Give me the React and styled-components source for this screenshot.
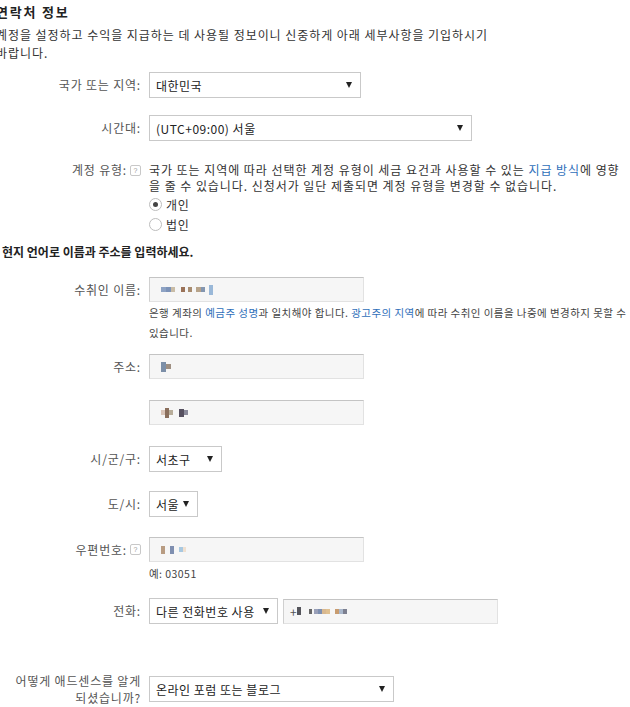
import styled, { createGlobalStyle } from "styled-components";

const GlobalStyle = createGlobalStyle`
  body {
    margin: 0;
    background: #fff;
    font-family: "Noto Sans CJK KR", "Noto Sans", sans-serif;
    color: #333;
  }
`;

const Page = styled.div`
  margin-left: -4px;
  width: 640px;
  overflow: hidden;
`;

const Title = styled.h2`
  margin: 3px 0 0;
  font-size: 13px;
  line-height: 18px;
  font-weight: bold;
  letter-spacing: 1.8px;
  color: #222;
`;

const Intro = styled.p`
  margin: 5px 0 0;
  font-size: 12px;
  line-height: 18px;
  letter-spacing: 0.95px;
  color: #333;
  white-space: nowrap;
`;

const SectionHeading = styled.h3`
  margin: ${(p) => p.$top}px 0 0 6px;
  font-size: 12px;
  line-height: 18px;
  font-weight: bold;
  color: #222;
`;

const Row = styled.div`
  display: grid;
  grid-template-columns: 145px 1fr;
  column-gap: 8px;
  align-items: ${(p) => (p.$top ? "start" : "center")};
  margin-top: ${(p) => p.$mt}px;
`;

const Label = styled.div`
  text-align: right;
  font-size: 12px;
  line-height: ${(p) => p.$lh || 16}px;
  letter-spacing: 0.8px;
  color: #555;
  white-space: nowrap;
  display: flex;
  justify-content: flex-end;
  align-items: center;
  gap: 3px;
`;

const HelpIcon = styled.span`
  display: inline-flex;
  align-items: center;
  justify-content: center;
  width: 9px;
  height: 9px;
  border: 1px solid #c8c8c8;
  border-radius: 2px;
  font-size: 7px;
  line-height: 1;
  letter-spacing: 0;
  color: #999;
  font-family: "Liberation Sans", sans-serif;
`;

const Controls = styled.div`
  display: flex;
  align-items: center;
  gap: 5px;
`;

const Select = styled.div`
  box-sizing: border-box;
  width: ${(p) => p.$w}px;
  height: 26px;
  border: 1px solid #c9c9c9;
  background: #fff;
  display: flex;
  align-items: center;
  justify-content: space-between;
  padding: 0 8px 0 6px;
  font-size: 12px;
  letter-spacing: 0.5px;
  color: #222;
  white-space: nowrap;
`;

const Arrow = styled.span`
  width: 0;
  height: 0;
  border-left: 3px solid transparent;
  border-right: 3px solid transparent;
  border-top: 6px solid #222;
  margin-left: 4px;
  flex-shrink: 0;
`;

const Input = styled.div`
  box-sizing: border-box;
  width: 215px;
  height: 25px;
  background: #f6f6f6;
  border: 1px solid #e2e2e2;
  border-top-color: #c4c4c4;
  border-left-color: #d0d0d0;
  display: flex;
  align-items: center;
  padding-left: ${(p) => p.$pl || 11}px;
  font-size: 12px;
  color: #555;
`;

const Pixel = styled.span`
  display: inline-block;
  width: ${(p) => p.$w || 5}px;
  height: ${(p) => p.$h || 5}px;
  background: ${(p) => p.$c};
  margin-right: ${(p) => p.$gap || 0}px;
`;

const PixelGroup = styled.span`
  display: inline-flex;
  align-items: center;
  height: 10px;
`;

const Blur = ({ pixels }) => (
  <PixelGroup>
    {pixels.map(([c, w, gap, h], i) => (
      <Pixel key={i} $c={c} $w={w} $gap={gap} $h={h} />
    ))}
  </PixelGroup>
);

const Body = styled.div`
  font-size: 12px;
  line-height: 16px;
  letter-spacing: 0.95px;
  color: #333;
  white-space: nowrap;
`;

const Link = styled.span`
  color: #2f6fba;
`;

const RadioRow = styled.label`
  display: flex;
  align-items: center;
  gap: 4px;
  height: 20px;
  font-size: 12px;
  letter-spacing: 0.8px;
  color: #333;
`;

const Radio = styled.span`
  box-sizing: border-box;
  width: 13px;
  height: 13px;
  border-radius: 50%;
  border: 1px solid #bdbdbd;
  background: #fff;
  display: inline-flex;
  align-items: center;
  justify-content: center;
  &::after {
    content: "";
    width: 5px;
    height: 5px;
    border-radius: 50%;
    background: ${(p) => (p.$checked ? "#444" : "transparent")};
  }
`;

const Hint = styled.div`
  margin: ${(p) => p.$mt}px 0 0 153px;
  font-size: 10.5px;
  line-height: ${(p) => p.$lh || 20}px;
  letter-spacing: 0.45px;
  color: #444;
  white-space: nowrap;
`;

const App = () => {
  return (
    <Page>
      <GlobalStyle />
      <Title>연락처 정보</Title>
      <Intro>
        계정을 설정하고 수익을 지급하는 데 사용될 정보이니 신중하게 아래 세부사항을 기입하시기
        <br />
        바랍니다.
      </Intro>

      <Row $mt={10}>
        <Label>국가 또는 지역:</Label>
        <Controls>
          <Select $w={212}>
            대한민국
            <Arrow />
          </Select>
        </Controls>
      </Row>

      <Row $mt={17}>
        <Label>시간대:</Label>
        <Controls>
          <Select $w={323}>
            (UTC+09:00) 서울
            <Arrow />
          </Select>
        </Controls>
      </Row>

      <Row $mt={21} $top>
        <Label>
          계정 유형: <HelpIcon>?</HelpIcon>
        </Label>
        <div>
          <Body>
            국가 또는 지역에 따라 선택한 계정 유형이 세금 요건과 사용할 수 있는 <Link>지급 방식</Link>에 영향
            <br />을 줄 수 있습니다. 신청서가 일단 제출되면 계정 유형을 변경할 수 없습니다.
          </Body>
          <RadioRow>
            <Radio $checked /> 개인
          </RadioRow>
          <RadioRow>
            <Radio /> 법인
          </RadioRow>
        </div>
      </Row>

      <SectionHeading $top={9}>현지 언어로 이름과 주소를 입력하세요.</SectionHeading>

      <Row $mt={16}>
        <Label>수취인 이름:</Label>
        <Controls>
          <Input>
            <Blur
              pixels={[
                ["#8ea3c4", 5, 0],
                ["#7d93b8", 5, 0],
                ["#c9bca6", 4, 6],
                ["#9a7258", 4, 3],
                ["#a88c70", 4, 4],
                ["#b7a38a", 5, 0],
                ["#8396b0", 4, 4],
                ["#9ab8d8", 4, 0, 10],
              ]}
            />
          </Input>
        </Controls>
      </Row>
      <Hint $mt={1}>
        은행 계좌의 <Link>예금주 성명</Link>과 일치해야 합니다. <Link>광고주의 지역</Link>에 따라 수취인 이름을 나중에 변경하지 못할 수
        <br />
        있습니다.
      </Hint>

      <Row $mt={11}>
        <Label>주소:</Label>
        <Controls>
          <Input>
            <Blur
              pixels={[
                ["#7c8fa8", 5, 0, 10],
                ["#9e8f82", 5, 0],
              ]}
            />
          </Input>
        </Controls>
      </Row>

      <Row $mt={21}>
        <Label />
        <Controls>
          <Input>
            <Blur
              pixels={[
                ["#d9c4b8", 4, 0],
                ["#8a6e5c", 4, 0, 10],
                ["#b8ad9a", 4, 6],
                ["#565060", 5, 0, 8],
                ["#8a8a9a", 4, 0],
              ]}
            />
          </Input>
        </Controls>
      </Row>

      <Row $mt={21}>
        <Label>시/군/구:</Label>
        <Controls>
          <Select $w={73}>
            서초구
            <Arrow />
          </Select>
        </Controls>
      </Row>

      <Row $mt={19}>
        <Label>도/시:</Label>
        <Controls>
          <Select $w={49}>
            서울
            <Arrow />
          </Select>
        </Controls>
      </Row>

      <Row $mt={20}>
        <Label>
          우편번호: <HelpIcon>?</HelpIcon>
        </Label>
        <Controls>
          <Input>
            <Blur
              pixels={[
                ["#b89c82", 4, 5, 8],
                ["#7f8fb0", 4, 5, 8],
                ["#a8c8e0", 4, 0],
                ["#f0e0d0", 3, 0],
              ]}
            />
          </Input>
        </Controls>
      </Row>
      <Hint $mt={3} $lh={18}>
        예: 03051
      </Hint>

      <Row $mt={15}>
        <Label>전화:</Label>
        <Controls>
          <Select $w={129}>
            다른 전화번호 사용
            <Arrow />
          </Select>
          <Input $pl={6}>
            +
            <Blur
              pixels={[
                ["#55555c", 4, 8, 8],
                ["#666", 3, 2],
                ["#9aa0b8", 4, 0],
                ["#7d8fb0", 4, 0],
                ["#d8b890", 4, 0],
                ["#e0c090", 4, 5],
                ["#c89c70", 4, 0],
                ["#aab8cc", 4, 0],
                ["#7d8090", 4, 0],
              ]}
            />
          </Input>
        </Controls>
      </Row>

      <Row $mt={48}>
        <Label $lh={17}>
          어떻게 애드센스를 알게
          <br />
          되셨습니까?
        </Label>
        <Controls>
          <Select $w={245}>
            온라인 포럼 또는 블로그
            <Arrow />
          </Select>
        </Controls>
      </Row>
    </Page>
  );
};

export default App;
